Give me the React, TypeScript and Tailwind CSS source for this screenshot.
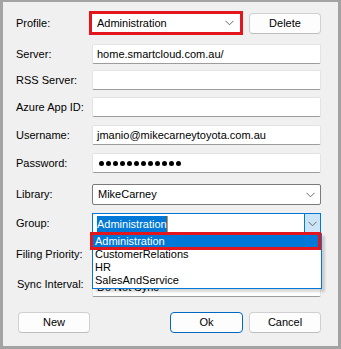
import React from "react";

function Chevron() {
  return (
    <svg width="9" height="6" viewBox="0 0 9 6" className="shrink-0">
      <path d="M0.5 0.8 L4.5 4.8 L8.5 0.8" fill="none" stroke="#6a6a6a" strokeWidth="1" />
    </svg>
  );
}

function Label({ children }: { children: React.ReactNode }) {
  return <div className="w-[76px] shrink-0 text-black">{children}</div>;
}

function TextBox({ value }: { value?: string }) {
  return (
    <div className="flex-1 h-[20px] flex items-center px-[4px] bg-white border border-[#e3e3e3] border-b-[#9c9c9c] rounded-[2px] text-black">
      {value}
    </div>
  );
}

function Button({ children, primary }: { children: React.ReactNode; primary?: boolean }) {
  return (
    <div
      className={
        "h-[21px] flex items-center justify-center bg-[#fdfdfd] rounded-[4px] text-black " +
        (primary ? "border border-[#0067c0] shadow-[inset_0_0_0_1px_#ffffff]" : "border border-[#d0d0d0] border-b-[#bdbdbd]")
      }
    >
      {children}
    </div>
  );
}

export default function App() {
  const groups = ["Administration", "CustomerRelations", "HR", "SalesAndService"];

  return (
    <div
      className="w-[341px] h-[349px] bg-[#f0f0f0] border-l-[3px] border-r-[3px] border-t-2 border-b-[3px] border-[#a3a3a3] text-[11px] leading-none"
      style={{ fontFamily: '"Liberation Sans", Arial, sans-serif' }}
    >
      <div className="pl-[13px] pr-[17px] pt-[9px]">
        {/* profile */}
        <div className="flex items-center h-[24px]">
          <Label>Profile:</Label>
          <div className="ml-[-3px] w-[154px] h-[24px] border-[3px] border-[#e3161e] bg-white flex items-center pl-[5px] pr-[6px]">
            <span className="flex-1 text-black">Administration</span>
            <Chevron />
          </div>
          <div className="ml-[6px] flex-1">
            <Button>Delete</Button>
          </div>
        </div>

        <div className="flex items-center mt-[9px]">
          <Label>Server:</Label>
          <TextBox value="home.smartcloud.com.au/" />
        </div>
        <div className="flex items-center mt-[6px]">
          <Label>RSS Server:</Label>
          <TextBox />
        </div>
        <div className="flex items-center mt-[7px]">
          <Label>Azure App ID:</Label>
          <TextBox />
        </div>
        <div className="flex items-center mt-[8px]">
          <Label>Username:</Label>
          <TextBox value="jmanio@mikecarneytoyota.com.au" />
        </div>
        <div className="flex items-center mt-[8px]">
          <Label>Password:</Label>
          <div className="flex-1 h-[20px] flex items-center gap-[2px] px-[6px] bg-white border border-[#e3e3e3] border-b-[#9c9c9c] rounded-[2px]">
            {Array.from({ length: 12 }).map((_, i) => (
              <div key={i} className="w-[5px] h-[5px] rounded-full bg-black" />
            ))}
          </div>
        </div>

        <div className="flex items-center mt-[11px]">
          <Label>Library:</Label>
          <div className="flex-1 h-[21px] flex items-center pl-[5px] pr-[5px] bg-white border border-[#7a7a7a] rounded-[2px]">
            <span className="flex-1 text-black">MikeCarney</span>
            <Chevron />
          </div>
        </div>

        {/* group with open list */}
        <div className="flex items-center mt-[8px]">
          <Label>Group:</Label>
          <div className="relative flex-1">
            <div className="h-[21px] flex items-stretch bg-white border border-[#0078d7]">
              <div className="flex-1 flex items-center pl-[4px]">
                <span className="bg-[#0078d7] text-white leading-[16px] h-[16px]">Administration</span>
                <span className="w-px h-[16px] bg-[#f08c1c]" />
              </div>
              <div className="w-[16px] flex items-center justify-center bg-[#cce4f7] border-l border-[#0078d7]">
                <Chevron />
              </div>
            </div>
            <div className="absolute left-0 right-[-1px] top-[20px] z-10 bg-white border border-[#0078d7] border-t-[#7a7a7a] shadow-[3px_3px_2px_rgba(0,0,0,0.15)] py-[1px]">
              {groups.map((g, i) => (
                <div
                  key={g}
                  className={
                    "h-[13px] flex items-center pl-[2px] " +
                    (i === 0 ? "bg-[#0078d7] text-white" : "text-black")
                  }
                >
                  {g}
                </div>
              ))}
            </div>
            <div className="absolute left-[-2px] right-0 top-[19px] h-[18px] z-20 border-[3px] border-[#e3161e]" />
          </div>
        </div>

        <div className="flex items-center mt-[10px] h-[20px]">
          <Label>Filing Priority:</Label>
          <TextBox />
        </div>
        <div className="flex items-center mt-[13px]">
          <div className="w-[76px] shrink-0 pl-[1px] mt-[-6px] text-black">Sync Interval:</div>
          <TextBox value="Do Not Sync" />
        </div>

        <div className="flex items-center mt-[15px]">
          <div className="w-[72px] ml-[2px]">
            <Button>New</Button>
          </div>
          <div className="flex-1" />
          <div className="w-[73px]">
            <Button primary>Ok</Button>
          </div>
          <div className="w-[72px] ml-[6px]">
            <Button>Cancel</Button>
          </div>
        </div>
      </div>
    </div>
  );
}
